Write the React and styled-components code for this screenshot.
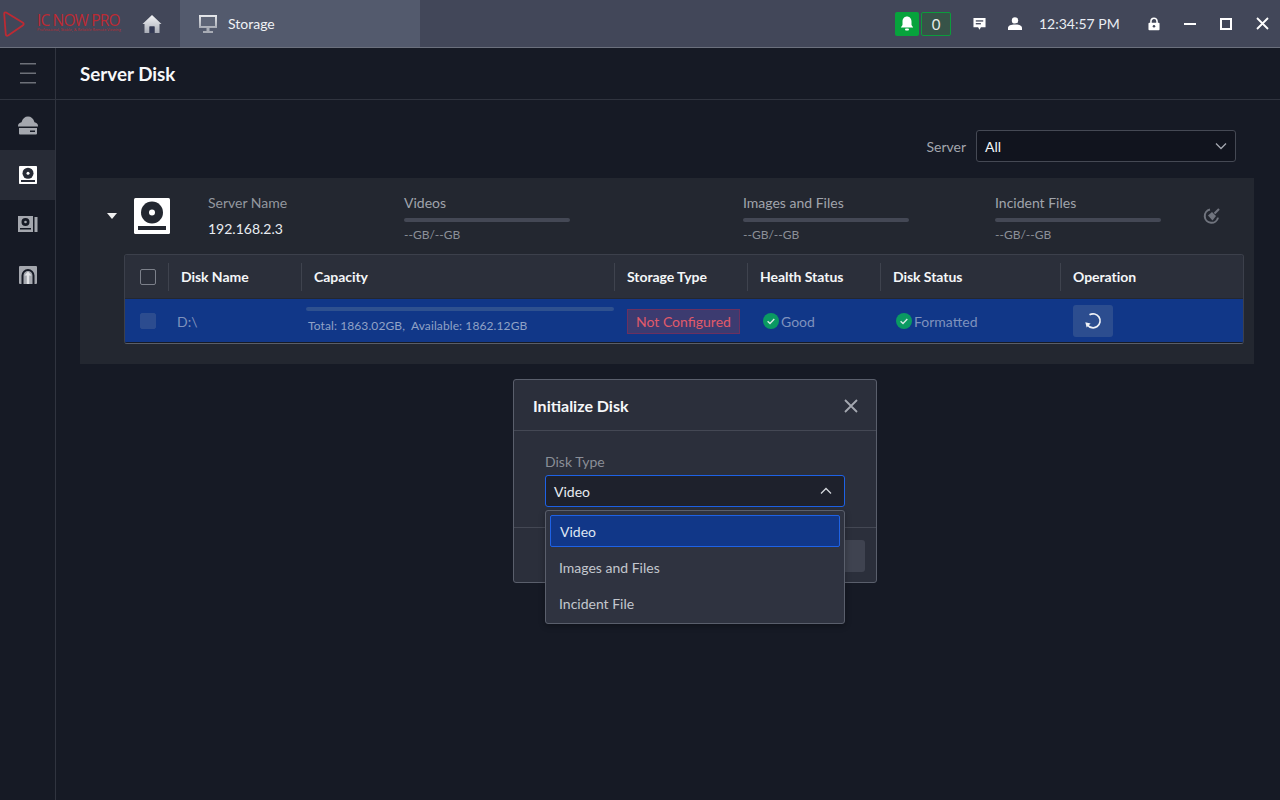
import React from "react";
import styled, { createGlobalStyle } from "styled-components";

const Global = createGlobalStyle`
  html, body { margin: 0; padding: 0; height: 100%; background: #161a25; }
  body { font-family: Lato, "Liberation Sans", sans-serif; overflow: hidden; }
  #root { height: 100%; }
  * { box-sizing: border-box; }
`;

const Page = styled.div`
  position: relative;
  width: 1280px;
  height: 800px;
  display: flex;
  flex-direction: column;
  background: #161a25;
`;

const TopBar = styled.header`
  height: 48px;
  flex: none;
  display: flex;
  align-items: stretch;
  background: #424759;
  border-bottom: 1px solid #6b707d;
`;

const Logo = styled.div`
  width: 129px;
  flex: none;
  display: flex;
  align-items: center;
  padding-left: 3px;
  gap: 12px;
  svg { flex: none; }
`;

const LogoText = styled.div`
  display: flex;
  flex-direction: column;
  margin-top: -2px;
`;

const LogoName = styled.span`
  font-family: "Open Sans", sans-serif;
  font-size: 15.5px;
  line-height: 13px;
  letter-spacing: -0.85px;
  color: #bd2a33;
  white-space: nowrap;
`;

const LogoTag = styled.span`
  font-family: "Open Sans", sans-serif;
  font-size: 3.8px;
  line-height: 5px;
  color: #bd2a33;
  white-space: nowrap;
`;

const HomeButton = styled.div`
  width: 51px;
  flex: none;
  display: flex;
  align-items: center;
  padding-left: 13px;
`;

const Tab = styled.div`
  width: 240px;
  flex: none;
  display: flex;
  align-items: center;
  gap: 11px;
  padding-left: 19px;
  background: #535a6d;
  color: #f0f2f5;
  font-size: 14px;
`;

const TopRight = styled.div`
  margin-left: auto;
  display: flex;
  align-items: center;
`;

const BellBox = styled.div`
  width: 24px;
  height: 24px;
  background: #07a33c;
  border-radius: 2px;
  display: flex;
  align-items: center;
  justify-content: center;
`;

const CountBox = styled.div`
  width: 30px;
  height: 24px;
  margin-left: 2px;
  margin-right: 16px;
  border: 1px solid #0c9c3c;
  border-radius: 2px;
  background: #375348;
  color: #e6ebea;
  font-size: 15px;
  display: flex;
  align-items: center;
  justify-content: center;
`;

const TopIcon = styled.div`
  width: ${(p) => p.$w}px;
  flex: none;
  height: 24px;
  display: flex;
  align-items: center;
  justify-content: center;
`;

const Clock = styled.span`
  color: #e9edf3;
  font-size: 14px;
  width: 97px;
  text-align: left;
  white-space: nowrap;
`;

const Body = styled.div`
  flex: 1;
  display: flex;
  min-height: 0;
`;

const Sidebar = styled.nav`
  width: 56px;
  flex: none;
  border-right: 1px solid #30343f;
  display: flex;
  flex-direction: column;
`;

const MenuToggle = styled.div`
  height: 52px;
  flex: none;
  display: flex;
  align-items: center;
  justify-content: center;
  border-bottom: 1px solid #30343f;
`;

const SideItem = styled.div`
  height: 50px;
  flex: none;
  display: flex;
  align-items: center;
  justify-content: center;
  background: ${(p) => (p.$active ? "#272b36" : "transparent")};
`;

const Main = styled.main`
  flex: 1;
  min-width: 0;
  display: flex;
  flex-direction: column;
`;

const TitleBar = styled.div`
  height: 52px;
  flex: none;
  display: flex;
  align-items: center;
  padding: 0 0 0 24px;
  border-bottom: 1px solid #30343f;
  color: #f7f8fa;
  font-size: 18.8px;
  font-weight: 700;
`;

const Content = styled.div`
  padding: 30px 26px 0 24px;
`;

const FilterRow = styled.div`
  height: 32px;
  display: flex;
  justify-content: flex-end;
  align-items: center;
  gap: 10px;
  margin: 0 18px 16px 0;
  color: #a2a6ae;
  font-size: 14px;
`;

const SelectBox = styled.div`
  width: 260px;
  height: 32px;
  border: 1px solid #454954;
  border-radius: 3px;
  background: #11141e;
  color: #f2f4f7;
  display: flex;
  align-items: center;
  justify-content: space-between;
  padding: 0 8px;
  font-size: 14px;
`;

const Card = styled.section`
  height: 186px;
  background: #232730;
  padding: 0 10px 0 44px;
`;

const CardHead = styled.div`
  height: 76px;
  display: flex;
  align-items: flex-start;
`;

const Caret = styled.div`
  width: 0;
  height: 0;
  margin: 35px 0 0 -17px;
  border-left: 5px solid transparent;
  border-right: 5px solid transparent;
  border-top: 6px solid #f0f0f0;
  flex: none;
`;

const DiskLogo = styled.div`
  margin: 20px 38px 0 17px;
  flex: none;
  height: 36px;
`;

const NameCol = styled.div`
  width: 196px;
  flex: none;
  padding-top: 15px;
`;

const NameLabel = styled.div`
  color: #93979f;
  font-size: 14px;
  line-height: 20px;
`;

const NameValue = styled.div`
  color: #e9edf2;
  font-size: 14px;
  line-height: 20px;
  margin-top: 6px;
`;

const StatCol = styled.div`
  width: ${(p) => p.$w}px;
  flex: none;
  padding-top: 15px;
`;

const StatLabel = styled.div`
  color: #a0a4ac;
  font-size: 14px;
  line-height: 20px;
`;

const StatBar = styled.div`
  width: 166px;
  height: 4px;
  border-radius: 2px;
  background: #444855;
  margin-top: 5px;
`;

const StatText = styled.div`
  color: #8c9098;
  font-size: 12px;
  line-height: 14px;
  margin-top: 6px;
`;

const CleanIcon = styled.div`
  margin: 29px 0 0 1px;
  width: 20px;
  height: 18px;
  flex: none;
`;

const Table = styled.div`
  width: 1120px;
  height: 90px;
  border: 1px solid #3c404b;
  border-bottom-color: #5a5e68;
  border-radius: 3px;
  overflow: hidden;
  display: flex;
  flex-direction: column;
`;

const Columns = `43px 133px 313px 133px 133px 180px 1fr`;

const HeadRow = styled.div`
  height: 44px;
  flex: none;
  display: grid;
  grid-template-columns: ${Columns};
  background: #2b2f3a;
  border-bottom: 1px solid #232730;
  align-items: center;
`;

const HeadCell = styled.div`
  height: 28px;
  display: flex;
  align-items: center;
  padding-left: 12px;
  border-left: ${(p) => (p.$first ? "none" : "1px solid #3f434e")};
  color: #f4f6f8;
  font-size: 14px;
  font-weight: 700;
  letter-spacing: -0.05px;
  ${(p) => p.$first && "padding-left: 15px;"}
`;

const Check = styled.div`
  width: 16px;
  height: 16px;
  border-radius: 2px;
  border: 1px solid ${(p) => (p.$dim ? "#2c4c8f" : "#7c808a")};
  background: ${(p) => (p.$dim ? "#2c4c8f" : "transparent")};
`;

const DataRow = styled.div`
  flex: 1;
  display: grid;
  grid-template-columns: ${Columns};
  background: #113788;
  align-items: center;
  border-bottom: 1px solid #161a25;
`;

const DataCell = styled.div`
  display: flex;
  align-items: center;
  padding-left: ${(p) => p.$pad ?? 13}px;
  padding-top: 1px;
  color: #7f92bd;
  font-size: 14px;
  height: 100%;
`;

const Capacity = styled.div`
  width: 100%;
  display: flex;
  flex-direction: column;
  padding-top: 7px;
  height: 100%;
  margin-right: -1px;
`;

const CapBar = styled.div`
  height: 4px;
  border-radius: 2px;
  background: #2f518f;
`;

const CapText = styled.div`
  margin: 8px 0 0 2px;
  color: #90a2c6;
  font-size: 12px;
  line-height: 14px;
  letter-spacing: 0.1px;
  white-space: pre;
`;

const Badge = styled.span`
  display: inline-flex;
  align-items: center;
  height: 25px;
  padding: 0 8px;
  background: #3c3b70;
  border: 1px solid #6b3060;
  color: #e05a6a;
  font-size: 14px;
  white-space: nowrap;
`;

const Status = styled.span`
  display: inline-flex;
  align-items: center;
  gap: 2px;
  color: #7f92bd;
`;

const OpButton = styled.div`
  width: 40px;
  height: 32px;
  border-radius: 3px;
  background: #2c4d8f;
  display: flex;
  align-items: center;
  justify-content: center;
`;

const Modal = styled.div`
  position: absolute;
  left: 513px;
  top: 379px;
  width: 364px;
  height: 204px;
  background: #2b2f3b;
  border: 1px solid #5a5f6c;
  border-radius: 3px;
  display: flex;
  flex-direction: column;
`;

const ModalHead = styled.div`
  height: 51px;
  flex: none;
  display: flex;
  align-items: center;
  justify-content: space-between;
  padding: 1px 17px 0 19px;
  border-bottom: 1px solid #444854;
  color: #f6f7f9;
  font-size: 16px;
  font-weight: 700;
`;

const ModalBody = styled.div`
  height: 97px;
  flex: none;
  padding: 21px 31px 0 31px;
  border-bottom: 1px solid #444854;
`;

const FieldLabel = styled.div`
  color: #8a8e97;
  font-size: 14px;
  line-height: 20px;
  margin-bottom: 3px;
`;

const FieldSelect = styled.div`
  height: 32px;
  border: 1px solid #1e62e6;
  border-radius: 3px;
  background: #1e212c;
  color: #e8ecf1;
  display: flex;
  align-items: center;
  justify-content: space-between;
  padding: 0 12px 0 8px;
  font-size: 14px;
`;

const ModalFoot = styled.div`
  flex: 1;
  display: flex;
  justify-content: flex-end;
  align-items: flex-start;
  padding: 12px 11px 0 0;
`;

const FootButton = styled.div`
  width: 80px;
  height: 32px;
  border-radius: 3px;
  background: #3f4350;
`;

const Menu = styled.div`
  position: absolute;
  left: 545px;
  top: 510px;
  width: 300px;
  height: 114px;
  background: #2f3340;
  border: 1px solid #5a5f6c;
  border-radius: 3px;
  padding: 4px;
  display: flex;
  flex-direction: column;
  gap: 4px;
  box-shadow: 0 2px 6px rgba(0, 0, 0, 0.3);
`;

const MenuItem = styled.div`
  height: 32px;
  flex: none;
  display: flex;
  align-items: center;
  padding-left: ${(p) => (p.$selected ? 9 : 8)}px;
  border: 1px solid ${(p) => (p.$selected ? "#1e62e6" : "transparent")};
  border-radius: 2px;
  background: ${(p) => (p.$selected ? "#113788" : "transparent")};
  color: ${(p) => (p.$selected ? "#dfe6f2" : "#c3c7ce")};
  font-size: 14px;
`;

const Chevron = ({ up, color = "#a4a8b0" }) => (
  <svg width="12" height="8" viewBox="0 0 12 8" fill="none">
    <path d={up ? "M1 6.5 6 1.5l5 5" : "M1 1.5l5 5 5-5"} stroke={color} strokeWidth="1.3" />
  </svg>
);

const GoodIcon = () => (
  <svg width="16" height="16" viewBox="0 0 16 16">
    <circle cx="8" cy="8" r="8" fill="#0a9a62" />
    <path d="M4.6 8.2 7 10.5l4.3-4.6" fill="none" stroke="#d6e9e4" strokeWidth="1.4" />
  </svg>
);

const DiskGlyph = ({ size, fg = "#fff", bg = "#232730" }) => (
  <svg width={size} height={size} viewBox="0 0 36 36">
    <rect width="36" height="36" rx="1.5" fill={fg} />
    <circle cx="18" cy="14.5" r="11" fill={bg} />
    <circle cx="18" cy="14.5" r="3" fill={fg} />
    <rect x="4" y="28" width="28" height="4" fill={bg} />
  </svg>
);

export default function App() {
  return (
    <Page>
      <Global />
      <TopBar>
        <Logo>
          <svg width="22" height="26" viewBox="0 0 22 26" fill="none">
            <path d="M1.200 2.800 Q1.200 .6 3.200 1.600 L20 11.700 Q21.400 13 20 14.300 L5.500 24.300 Q3.200 25.600 2.800 23.500 Z" stroke="#bd2a33" strokeWidth="1.800" />
          </svg>
          <LogoText>
            <LogoName>IC NOW PRO</LogoName>
            <LogoTag>Professional, Stable, &amp; Reliable Remote Viewing</LogoTag>
          </LogoText>
        </Logo>
        <HomeButton>
          <svg width="20" height="20" viewBox="0 0 20 20">
            <defs>
              <linearGradient id="homeG" x1="0" y1="0" x2="0" y2="1">
                <stop offset="0" stopColor="#f4f5f7" />
                <stop offset="1" stopColor="#a9adb7" />
              </linearGradient>
            </defs>
            <path d="M10 1 19.500 10 17.500 10 17.500 19 12.500 19 12.500 12.500 7.500 12.500 7.500 19 2.500 19 2.500 10 .5 10Z" fill="url(#homeG)" />
            <rect x="7.500" y="12.500" width="5" height="6.500" fill="#343a55" />
          </svg>
        </HomeButton>
        <Tab>
          <svg width="18" height="18" viewBox="0 0 18 18">
            <defs>
              <linearGradient id="monG" x1="0" y1="0" x2="0" y2="1">
                <stop offset="0" stopColor="#e6e8ec" />
                <stop offset="1" stopColor="#a8acb5" />
              </linearGradient>
            </defs>
            <path fillRule="evenodd" d="M0 0h18v13H0ZM2 2v9h14V2Z" fill="url(#monG)" />
            <rect x="2" y="2" width="14" height="9" fill="#5e6577" />
            <rect x="7.500" y="13" width="3" height="3" fill="#a8acb5" />
            <rect x="4" y="16" width="10" height="2" fill="#a8acb5" />
          </svg>
          <span>Storage</span>
        </Tab>
        <TopRight>
          <BellBox>
            <svg width="14" height="15" viewBox="0 0 14 15" fill="#fff">
              <path d="M7 .5C4.200 .5 2.500 2.700 2.500 5.500v3.400L.8 11.500h12.400l-1.700-2.600V5.500C11.500 2.700 9.800 .5 7 .5Z" />
              <rect x="5" y="12.500" width="4" height="2" rx="1" />
            </svg>
          </BellBox>
          <CountBox>0</CountBox>
          <TopIcon $w={24}>
            <svg width="13" height="14" viewBox="0 0 14 14">
              <path d="M.5.5h13v10H8.500L7 13.200 5.500 10.500h-5Z" fill="#fff" />
              <rect x="3" y="3" width="8" height="1.400" fill="#424759" />
              <rect x="3" y="6" width="5.500" height="1.400" fill="#424759" />
            </svg>
          </TopIcon>
          <TopIcon $w={48}>
            <svg width="14" height="13" viewBox="0 0 14 13" fill="#fff">
              <circle cx="7" cy="3.400" r="3.200" />
              <path d="M0 13v-2.200C0 8.600 3 7.400 7 7.400s7 1.200 7 3.400V13Z" />
            </svg>
          </TopIcon>
          <Clock>12:34:57 PM</Clock>
          <TopIcon $w={36}>
            <svg width="12" height="14" viewBox="0 0 13 15">
              <path d="M3.200 7V4.500a3.300 3.300 0 0 1 6.600 0V7" fill="none" stroke="#fff" strokeWidth="1.700" />
              <rect x=".5" y="6.200" width="12" height="8" rx="1" fill="#fff" />
              <circle cx="6.500" cy="10" r="1.400" fill="#424759" />
            </svg>
          </TopIcon>
          <TopIcon $w={36}>
            <svg width="12" height="2" viewBox="0 0 12 2"><rect width="12" height="2" fill="#fff" /></svg>
          </TopIcon>
          <TopIcon $w={36}>
            <svg width="12" height="12" viewBox="0 0 12 12"><rect x="1" y="1" width="10" height="10" fill="none" stroke="#fff" strokeWidth="2" /></svg>
          </TopIcon>
          <TopIcon $w={36}>
            <svg width="13" height="13" viewBox="0 0 13 13"><path d="M1 1l11 11M12 1 1 12" stroke="#fff" strokeWidth="1.800" fill="none" /></svg>
          </TopIcon>
        </TopRight>
      </TopBar>
      <Body>
        <Sidebar>
          <MenuToggle>
            <svg width="16" height="21" viewBox="0 0 16 21" fill="#6d7079">
              <rect y="0" width="16" height="1.500" />
              <rect y="9.500" width="16" height="1.500" />
              <rect y="19" width="16" height="1.500" />
            </svg>
          </MenuToggle>
          <SideItem>
            <svg width="20" height="19" viewBox="0 0 20 19" fill="#a4a7ae">
              <path d="M0 10C0 7.800 1.500 6.500 3.500 6.200 4.500 2.500 7 .5 10 .5s5.500 2 6.500 5.700C18.500 6.500 20 7.800 20 10v.5H0Z" />
              <path fillRule="evenodd" d="M1 12h18v5.500a1 1 0 0 1-1 1H2a1 1 0 0 1-1-1Zm11 2.500v1.500h5v-1.500Z" />
            </svg>
          </SideItem>
          <SideItem $active>
            <DiskGlyph size={18} bg="#272b36" />
          </SideItem>
          <SideItem>
            <svg width="20" height="18" viewBox="0 0 20 18" fill="#a4a7ae">
              <path fillRule="evenodd" d="M0 0h15v16H0Zm7.500 2A4 4 0 1 0 7.500 10 4 4 0 0 0 7.500 2ZM2 12v1.500h11V12Z" />
              <circle cx="7.500" cy="6" r="1.300" />
              <rect x="16.500" y="1" width="3" height="15" />
            </svg>
          </SideItem>
          <SideItem>
            <svg width="18" height="18" viewBox="0 0 18 18">
              <rect width="18" height="18" rx="1" fill="#a4a7ae" />
              <path d="M2.500 18V9.500a6.500 6.500 0 0 1 13 0V18h-2V9.500a4.500 4.500 0 0 0-9 0V18Z" fill="#161a25" />
              <path d="M9 5.500 12.500 9.500H10.200V18H7.800V9.500H5.500Z" fill="#e2e3e6" />
            </svg>
          </SideItem>
        </Sidebar>
        <Main>
          <TitleBar>Server Disk</TitleBar>
          <Content>
            <FilterRow>
              <span>Server</span>
              <SelectBox>
                <span>All</span>
                <Chevron />
              </SelectBox>
            </FilterRow>
            <Card>
              <CardHead>
                <Caret />
                <DiskLogo><DiskGlyph size={36} /></DiskLogo>
                <NameCol>
                  <NameLabel>Server Name</NameLabel>
                  <NameValue>192.168.2.3</NameValue>
                </NameCol>
                <StatCol $w={339}>
                  <StatLabel>Videos</StatLabel>
                  <StatBar />
                  <StatText>--GB/--GB</StatText>
                </StatCol>
                <StatCol $w={252}>
                  <StatLabel>Images and Files</StatLabel>
                  <StatBar />
                  <StatText>--GB/--GB</StatText>
                </StatCol>
                <StatCol $w={207}>
                  <StatLabel>Incident Files</StatLabel>
                  <StatBar />
                  <StatText>--GB/--GB</StatText>
                </StatCol>
                <CleanIcon>
                  <svg width="18" height="18" viewBox="0 0 18 18" fill="none">
                    <path d="M7 2.600A6.700 6.700 0 1 0 15 10.600" stroke="#70747e" strokeWidth="2" />
                    <path d="M5 8.500 9 5l4 4-3.500 4.500Z" fill="#70747e" />
                    <path d="M11.500 6.500 16 2" stroke="#70747e" strokeWidth="2.200" />
                  </svg>
                </CleanIcon>
              </CardHead>
              <Table>
                <HeadRow>
                  <HeadCell $first><Check /></HeadCell>
                  <HeadCell>Disk Name</HeadCell>
                  <HeadCell>Capacity</HeadCell>
                  <HeadCell>Storage Type</HeadCell>
                  <HeadCell>Health Status</HeadCell>
                  <HeadCell>Disk Status</HeadCell>
                  <HeadCell>Operation</HeadCell>
                </HeadRow>
                <DataRow>
                  <DataCell $pad={15}><Check $dim /></DataCell>
                  <DataCell $pad={9}>D:\</DataCell>
                  <DataCell $pad={5}>
                    <Capacity>
                      <CapBar />
                      <CapText>Total: 1863.02GB,  Available: 1862.12GB</CapText>
                    </Capacity>
                  </DataCell>
                  <DataCell>
                    <Badge>Not Configured</Badge>
                  </DataCell>
                  <DataCell $pad={16}>
                    <Status><GoodIcon />Good</Status>
                  </DataCell>
                  <DataCell $pad={16}>
                    <Status><GoodIcon />Formatted</Status>
                  </DataCell>
                  <DataCell>
                    <OpButton>
                      <svg width="18" height="18" viewBox="0 0 18 18" fill="none">
                        <path d="M5.500 2.800A7 7 0 1 1 3.500 13" stroke="#eef1f6" strokeWidth="1.700" />
                        <path d="M1.300 10.200 6.600 11.400 2.600 15.500Z" fill="#eef1f6" />
                      </svg>
                    </OpButton>
                  </DataCell>
                </DataRow>
              </Table>
            </Card>
          </Content>
        </Main>
      </Body>
      <Modal>
        <ModalHead>
          <span>Initialize Disk</span>
          <svg width="16" height="16" viewBox="0 0 16 16"><path d="M2 2l12 12M14 2 2 14" stroke="#a4a8b0" strokeWidth="1.800" /></svg>
        </ModalHead>
        <ModalBody>
          <FieldLabel>Disk Type</FieldLabel>
          <FieldSelect>
            <span>Video</span>
            <Chevron up color="#d4d7dc" />
          </FieldSelect>
        </ModalBody>
        <ModalFoot>
          <FootButton />
        </ModalFoot>
      </Modal>
      <Menu>
        <MenuItem $selected>Video</MenuItem>
        <MenuItem>Images and Files</MenuItem>
        <MenuItem>Incident File</MenuItem>
      </Menu>
    </Page>
  );
}
